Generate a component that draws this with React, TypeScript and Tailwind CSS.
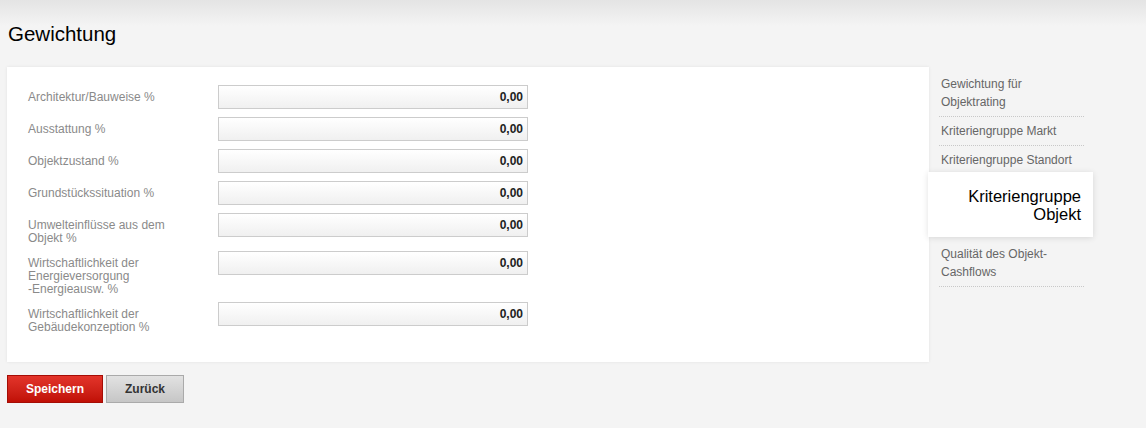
import React from "react";

const felder = [
  { label: ["Architektur/Bauweise %"], wert: "0,00" },
  { label: ["Ausstattung %"], wert: "0,00" },
  { label: ["Objektzustand %"], wert: "0,00" },
  { label: ["Grundstückssituation %"], wert: "0,00" },
  { label: ["Umwelteinflüsse aus dem", "Objekt %"], wert: "0,00" },
  { label: ["Wirtschaftlichkeit der", "Energieversorgung", "-Energieausw. %"], wert: "0,00" },
  { label: ["Wirtschaftlichkeit der", "Gebäudekonzeption %"], wert: "0,00" },
];

export default function App() {
  return (
    <div className="min-h-[428px] w-[1146px] bg-[#f4f4f4] font-['Liberation_Sans',Arial,sans-serif] overflow-hidden">
      <div className="h-[26px] bg-gradient-to-b from-[#e4e4e4] to-[#f4f4f4]" />
      <h1 className="ml-[8px] -mt-[4px] text-[20.5px] leading-[23px] text-black">Gewichtung</h1>

      <div className="mt-[22px] flex items-start">
        <div className="ml-[7px] w-[922px] h-[295px] bg-white shadow-[0_0_3px_rgba(0,0,0,0.08)] pt-[18px] pl-[21px]">
          {felder.map((f, i) => (
            <div key={i} className="flex items-start">
              <label className="w-[190px] py-[6px] text-[12px] leading-[13px] text-[#8a8a8a]">
                {f.label.map((l, j) => (
                  <div key={j}>{l}</div>
                ))}
              </label>
              <div className="mb-[8px] w-[310px] h-[24px] border border-[#cccccc] bg-gradient-to-b from-white to-[#f0f0f0] flex items-center justify-end pr-[4px] text-[12px] font-bold text-[#222]">
                {f.wert}
              </div>
            </div>
          ))}
        </div>

        <div className="w-[164px] pt-[3px] text-[12px] leading-[18px] text-[#666]">
          <div className="ml-[10px] w-[145px] pl-[2px] pt-[5px] pb-[5px] border-b border-dotted border-[#c8c8c8]">
            Gewichtung für
            <br />
            Objektrating
          </div>
          <div className="ml-[10px] w-[145px] pl-[2px] pt-[5px] pb-[5px] border-b border-dotted border-[#c8c8c8]">
            Kriteriengruppe Markt
          </div>
          <div className="ml-[10px] w-[145px] pl-[2px] pt-[5px] pb-[3px]">Kriteriengruppe Standort</div>
          <div className="-ml-[1px] w-[165px] bg-white shadow-[0_1px_6px_rgba(0,0,0,0.12)] pt-[15px] pb-[14px] pr-[12px] text-right text-[16.5px] leading-[18px] text-black">
            Kriteriengruppe
            <br />
            Objekt
          </div>
          <div className="ml-[10px] w-[145px] pl-[2px] pt-[8px] pb-[5px] border-b border-dotted border-[#c8c8c8]">
            Qualität des Objekt-
            <br />
            Cashflows
          </div>
        </div>
      </div>

      <div className="ml-[7px] mt-[13px] flex gap-[3px]">
        <button className="w-[96px] h-[28px] border border-[#a50d05] bg-gradient-to-b from-[#e3342a] to-[#c00f05] text-white text-[12px] font-bold">
          Speichern
        </button>
        <button className="w-[78px] h-[28px] border border-[#aaaaaa] bg-gradient-to-b from-[#e2e2e2] to-[#c6c6c6] text-[#333] text-[12px] font-bold">
          Zurück
        </button>
      </div>
    </div>
  );
}
